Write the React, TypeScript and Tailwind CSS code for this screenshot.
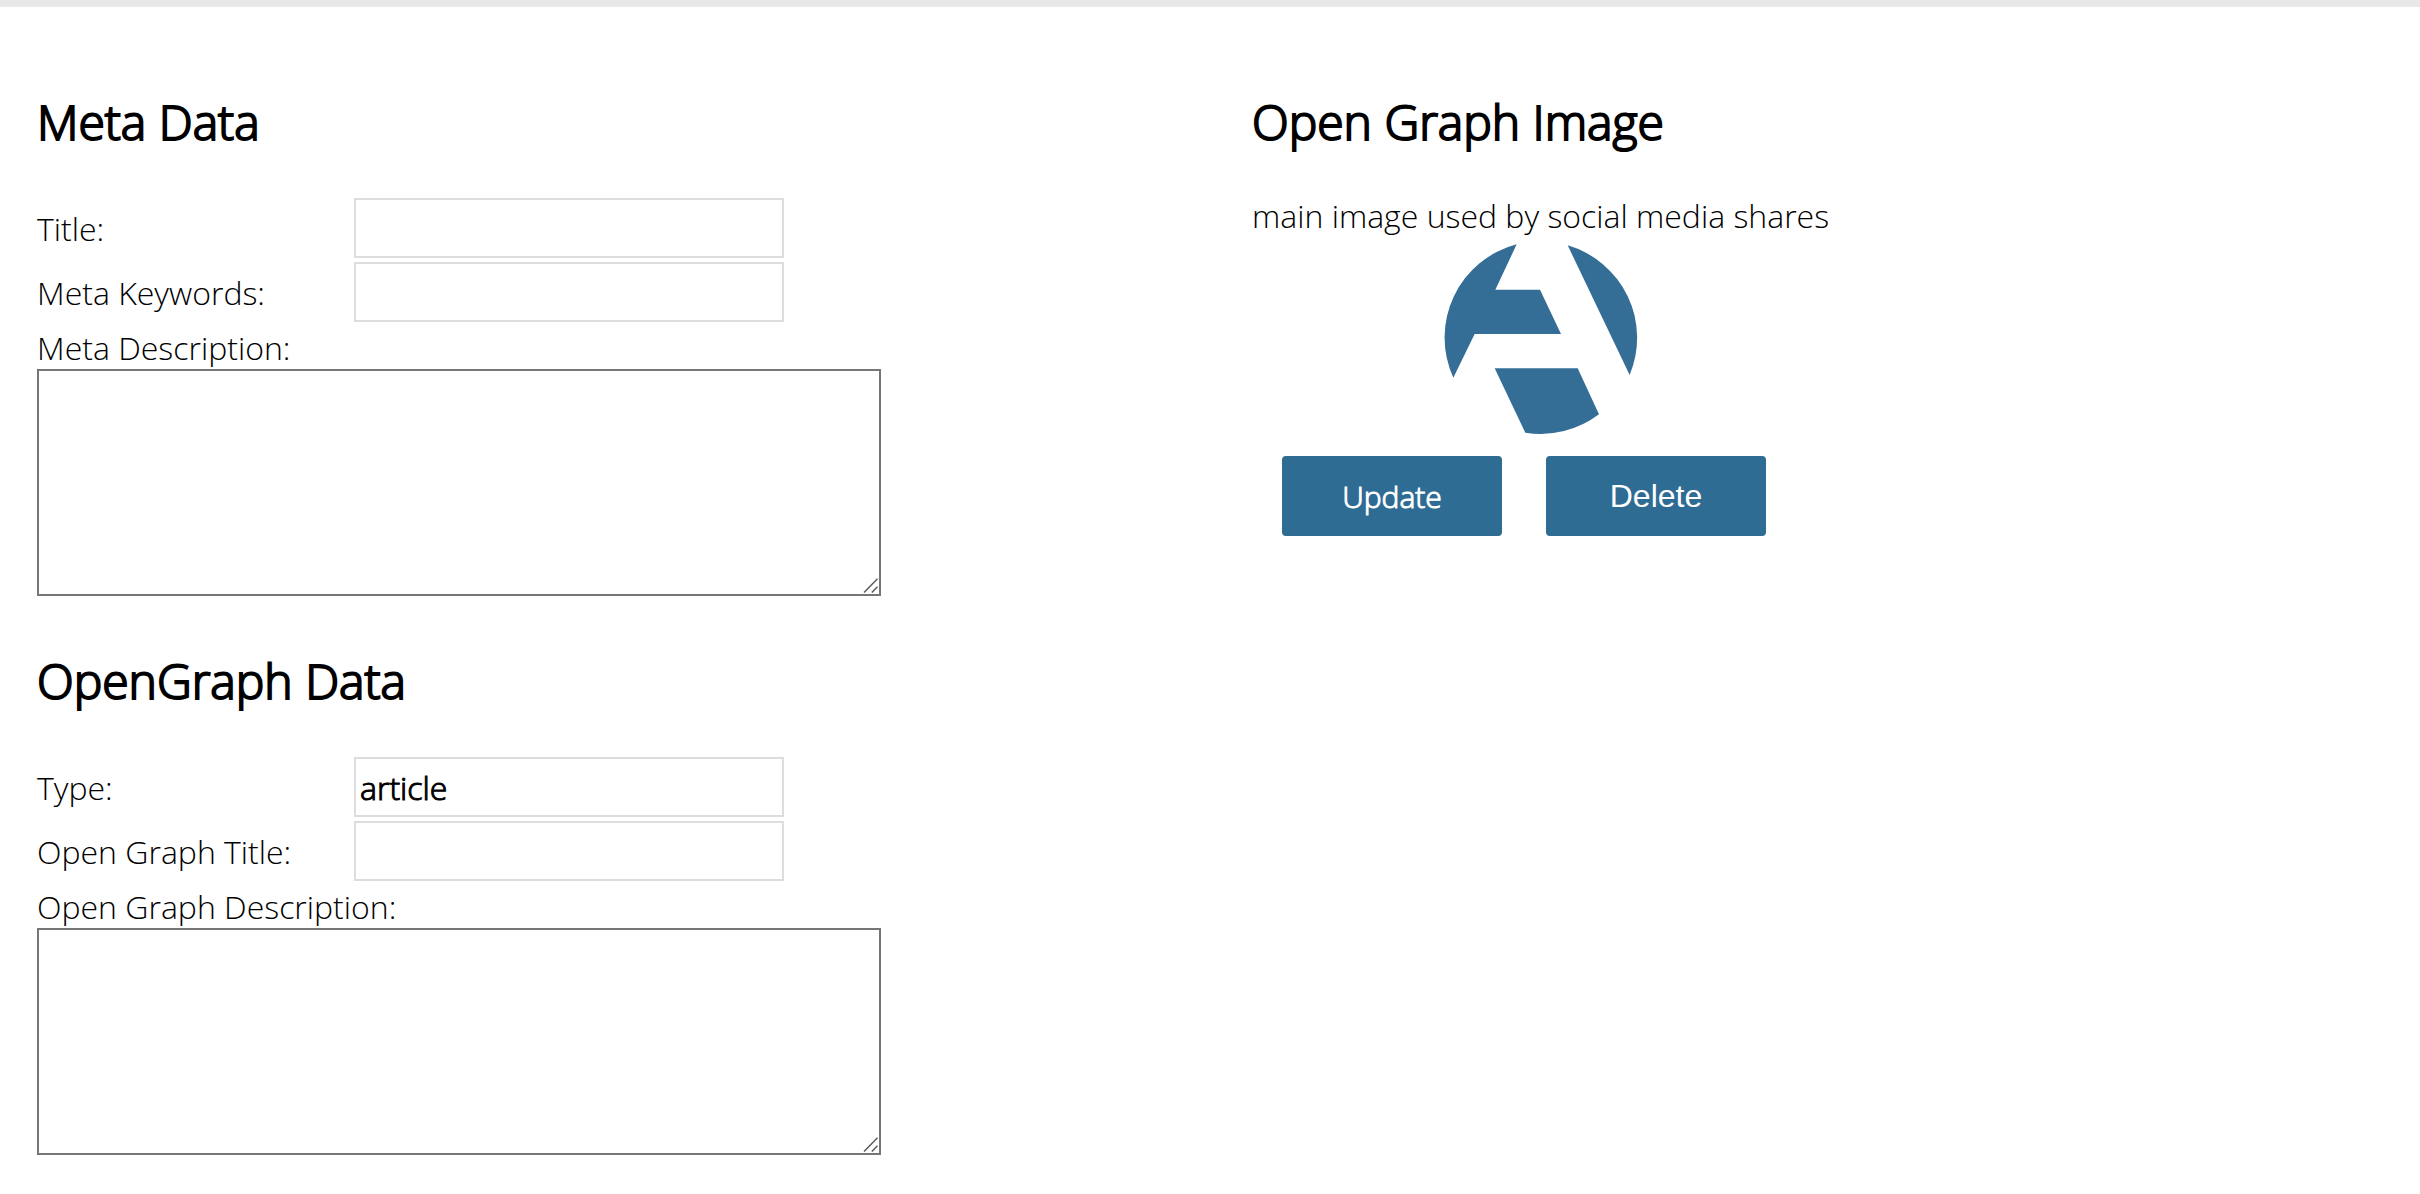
import { useState } from 'react'

interface FieldProps {
  id: string
  label: string
  initial?: string
}

function TextField({ id, label, initial = '' }: FieldProps) {
  const [value, setValue] = useState(initial)

  return (
    <div className="flex items-center">
      <label htmlFor={id} className="w-[317px] shrink-0">{label}</label>
      <input
        id={id}
        type="text"
        value={value}
        onChange={e => setValue(e.target.value)}
        className="h-[60px] w-[430px] border-2 border-[#dddddd] bg-white px-1 outline-none [-webkit-text-stroke:1px_black]"
      />
    </div>
  )
}

function TextArea({ id, label, initial = '' }: FieldProps) {
  const [value, setValue] = useState(initial)

  return (
    <div>
      <label htmlFor={id} className="block">{label}</label>
      <div className="relative w-full max-w-[844px]">
        <textarea
          id={id}
          value={value}
          onChange={e => setValue(e.target.value)}
          className="block h-[227px] w-full resize-none border-2 border-[#767676] bg-white p-1 outline-none"
        />
        {/* Corner grip */}
        <svg
          viewBox="0 0 15 15"
          className="pointer-events-none absolute right-[3px] bottom-[3px] size-[15px]"
          stroke="#5a5a5a"
          strokeWidth="1.5"
          aria-hidden="true"
        >
          <path d="M1 14.5 14.5 0.8M8.8 14.5 14.5 8.8" />
        </svg>
      </div>
    </div>
  )
}

function Heading({ children }: { children: string }) {
  return (
    <h2 className="text-5xl leading-[64px] [-webkit-text-stroke:2px_black]">{children}</h2>
  )
}

function Logo() {
  return (
    <svg
      viewBox="69 72 582 573"
      className="mx-auto mt-[7px] h-[191px] w-[194px]"
      fill="#346e97"
      role="img"
      aria-label="Open Graph image"
    >
      <path d="M287 73 223 209H357L420 342H161L97 473A289 289 0 0 1 287 73Z" />
      <path d="M440 76A289 289 0 0 1 626 465Z" />
      <path d="M221 445H470L534 583A289 289 0 0 1 313 638Z" />
    </svg>
  )
}

const BUTTON = 'h-20 w-[220px] rounded bg-[#2e6c94] text-white'

export default function App() {
  return (
    <div className="bg-white font-['Open_Sans',sans-serif] text-[32px] leading-[43px] font-light text-black">
      <div className="h-[7px] bg-[#e8e8e8]" />

      <main className="grid grid-cols-2 gap-[84px] px-[37px] pt-[83px]">
        <form className="flex flex-col gap-[53px]">
          <section className="flex flex-col gap-1">
            <div className="mb-10">
              <Heading>Meta Data</Heading>
            </div>
            <TextField id="title" label="Title:" />
            <TextField id="keywords" label="Meta Keywords:" />
            <TextArea id="description" label="Meta Description:" />
          </section>

          <section className="flex flex-col gap-1">
            <div className="mb-10">
              <Heading>OpenGraph Data</Heading>
            </div>
            <TextField id="og-type" label="Type:" initial="article" />
            <TextField id="og-title" label="Open Graph Title:" />
            <TextArea id="og-description" label="Open Graph Description:" />
          </section>
        </form>

        <section className="w-fit">
          <Heading>Open Graph Image</Heading>
          <p className="mt-10">main image used by social media shares</p>
          <Logo />
          <div className="mt-[21px] ml-[30px] flex gap-11">
            <button type="button" className={`${BUTTON} text-[30px] [-webkit-text-stroke:1px_white]`}>
              Update
            </button>
            <button type="button" className={`${BUTTON} font-['Liberation_Sans',Arial,sans-serif]`}>
              Delete
            </button>
          </div>
        </section>
      </main>
    </div>
  )
}
